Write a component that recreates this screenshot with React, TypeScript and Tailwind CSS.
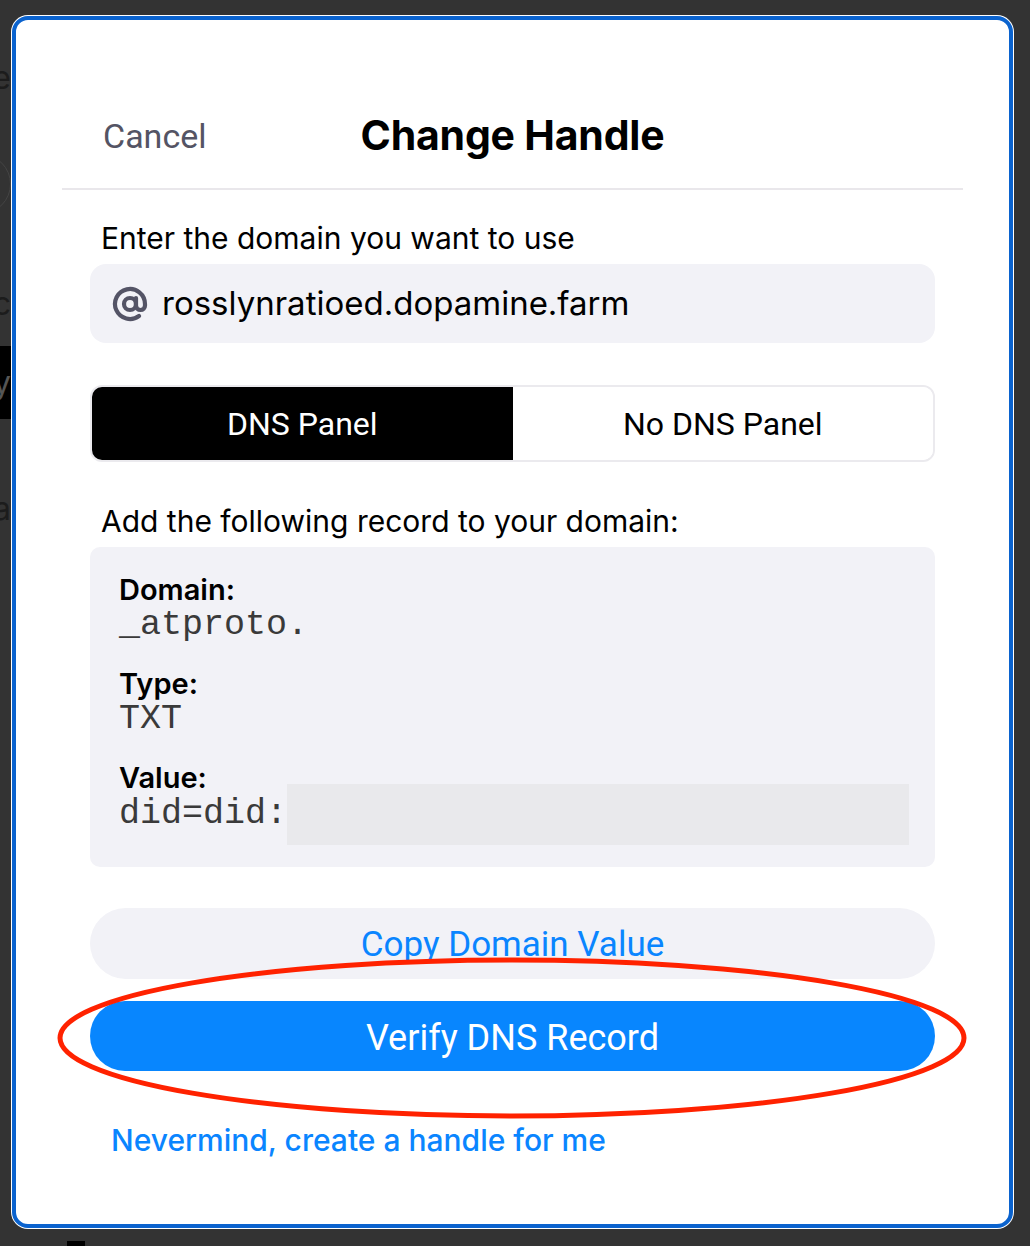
import React from "react";
import { AtSign } from "lucide-react";

const sans = "font-['Inter','Noto_Sans',sans-serif]";
const mono = "font-['Liberation_Mono','DejaVu_Sans_Mono',monospace]";

function BackdropPage() {
  // the page behind the sheet, only its left edge peeks out
  return (
    <div className={`w-[11px] overflow-hidden flex flex-col items-end pt-[58px] text-[32px] text-[#1c1c1c] ${sans}`}>
      <div className="leading-[40px] whitespace-nowrap">Handle</div>
      <div className="mt-[56px] w-[60px] h-[60px] shrink-0 rounded-full border border-[#444]" />
      <div className="mt-[70px] leading-[40px] whitespace-nowrap">Domain dc</div>
      <div className="mt-[22px] h-[73px] w-[40px] shrink-0 bg-black text-[#555] leading-[73px] text-right">y</div>
      <div className="mt-[70px] leading-[40px] whitespace-nowrap">Pa</div>
    </div>
  );
}

function RecordField({ label, value }: { label: string; value: string }) {
  return (
    <div className="flex flex-col">
      <div className="text-[29px] leading-[32px] font-semibold text-black">{label}</div>
      <div className={`${mono} text-[35px] leading-[38px] text-[#3a3a3a]`}>{value}</div>
    </div>
  );
}

function ChangeHandleSheet() {
  return (
    <div className="absolute left-[11px] top-[15px] w-[1003px] h-[1214px] bg-white rounded-[17px] p-px">
      <div className={`relative h-full rounded-[16px] border-[4px] border-[#0b63ce] bg-white px-[46px] ${sans}`}>
        <div className="relative h-[170px] pt-[62px] flex items-center justify-center border-b-2 border-[#e9e7eb]">
          <button className="absolute left-[41px] top-[96px] text-[34px] leading-[40px] text-[#545464] font-['Roboto',sans-serif]">
            Cancel
          </button>
          <h2 className="text-[41px] leading-[46px] font-bold text-black tracking-[-0.2px]">Change Handle</h2>
        </div>

        <div className="px-[28px] flex flex-col">
          <label className="mt-[30px] pl-[11px] text-[30px] leading-[36px] text-black">
            Enter the domain you want to use
          </label>
          <div className="mt-[8px] h-[79px] rounded-[16px] bg-[#f2f2f7] flex items-center gap-[14px] pl-[22px]">
            <AtSign size={36} strokeWidth={2.8} color="#545466" />
            <span className="text-[33px] text-black">rosslynratioed.dopamine.farm</span>
          </div>

          <div className="mt-[42px] h-[77px] rounded-[12px] border-2 border-[#ebeaee] flex overflow-hidden">
            <button className="flex-1 bg-black text-white text-[32px] font-['Roboto',sans-serif]">DNS Panel</button>
            <button className="flex-1 bg-white text-black text-[32px] font-['Roboto',sans-serif]">No DNS Panel</button>
          </div>

          <p className="mt-[41px] pl-[11px] text-[30px] leading-[36px] text-black">
            Add the following record to your domain:
          </p>
          <div className="mt-[8px] h-[320px] rounded-[10px] bg-[#f2f2f7] pl-[29px] pr-[26px] pt-[27px] flex flex-col gap-[24px]">
            <RecordField label="Domain:" value="_atproto." />
            <RecordField label="Type:" value="TXT" />
            <div className="flex flex-col">
              <div className="text-[29px] leading-[32px] font-semibold text-black">Value:</div>
              <div className="flex items-center mt-[1px]">
                <span className={`${mono} text-[35px] leading-[38px] text-[#3a3a3a]`}>did=did:</span>
                <div className="flex-1 h-[61px] -my-[12px] bg-[#e9e9ec]" />
              </div>
            </div>
          </div>

          <button className="mt-[41px] h-[71px] pt-[4px] rounded-full bg-[#f2f2f7] text-[#0a85ff] text-[35px] font-['Roboto',sans-serif]">
            Copy Domain Value
          </button>
          <button className="mt-[22px] h-[70px] pt-[4px] rounded-full bg-[#0886fe] text-white text-[36px] font-['Roboto',sans-serif]">
            Verify DNS Record
          </button>

          <button className="mt-[51px] self-start pl-[21px] text-[30px] leading-[36px] font-medium text-[#0a85ff]">
            Nevermind, create a handle for me
          </button>
        </div>

        {/* red annotation ring drawn over the verify button */}
        <svg className="absolute left-[40px] top-[935px] pointer-events-none" width="920" height="170" viewBox="0 0 920 170">
          <ellipse cx="456" cy="83" rx="452" ry="78" fill="none" stroke="#ff2200" strokeWidth="5" />
        </svg>
      </div>
    </div>
  );
}

export default function App() {
  return (
    <div className="relative w-[1030px] h-[1246px] bg-[#333333] overflow-hidden">
      <BackdropPage />
      <div className="absolute left-[67px] top-[1241px] w-[18px] h-[5px] bg-black" />
      <ChangeHandleSheet />
    </div>
  );
}
